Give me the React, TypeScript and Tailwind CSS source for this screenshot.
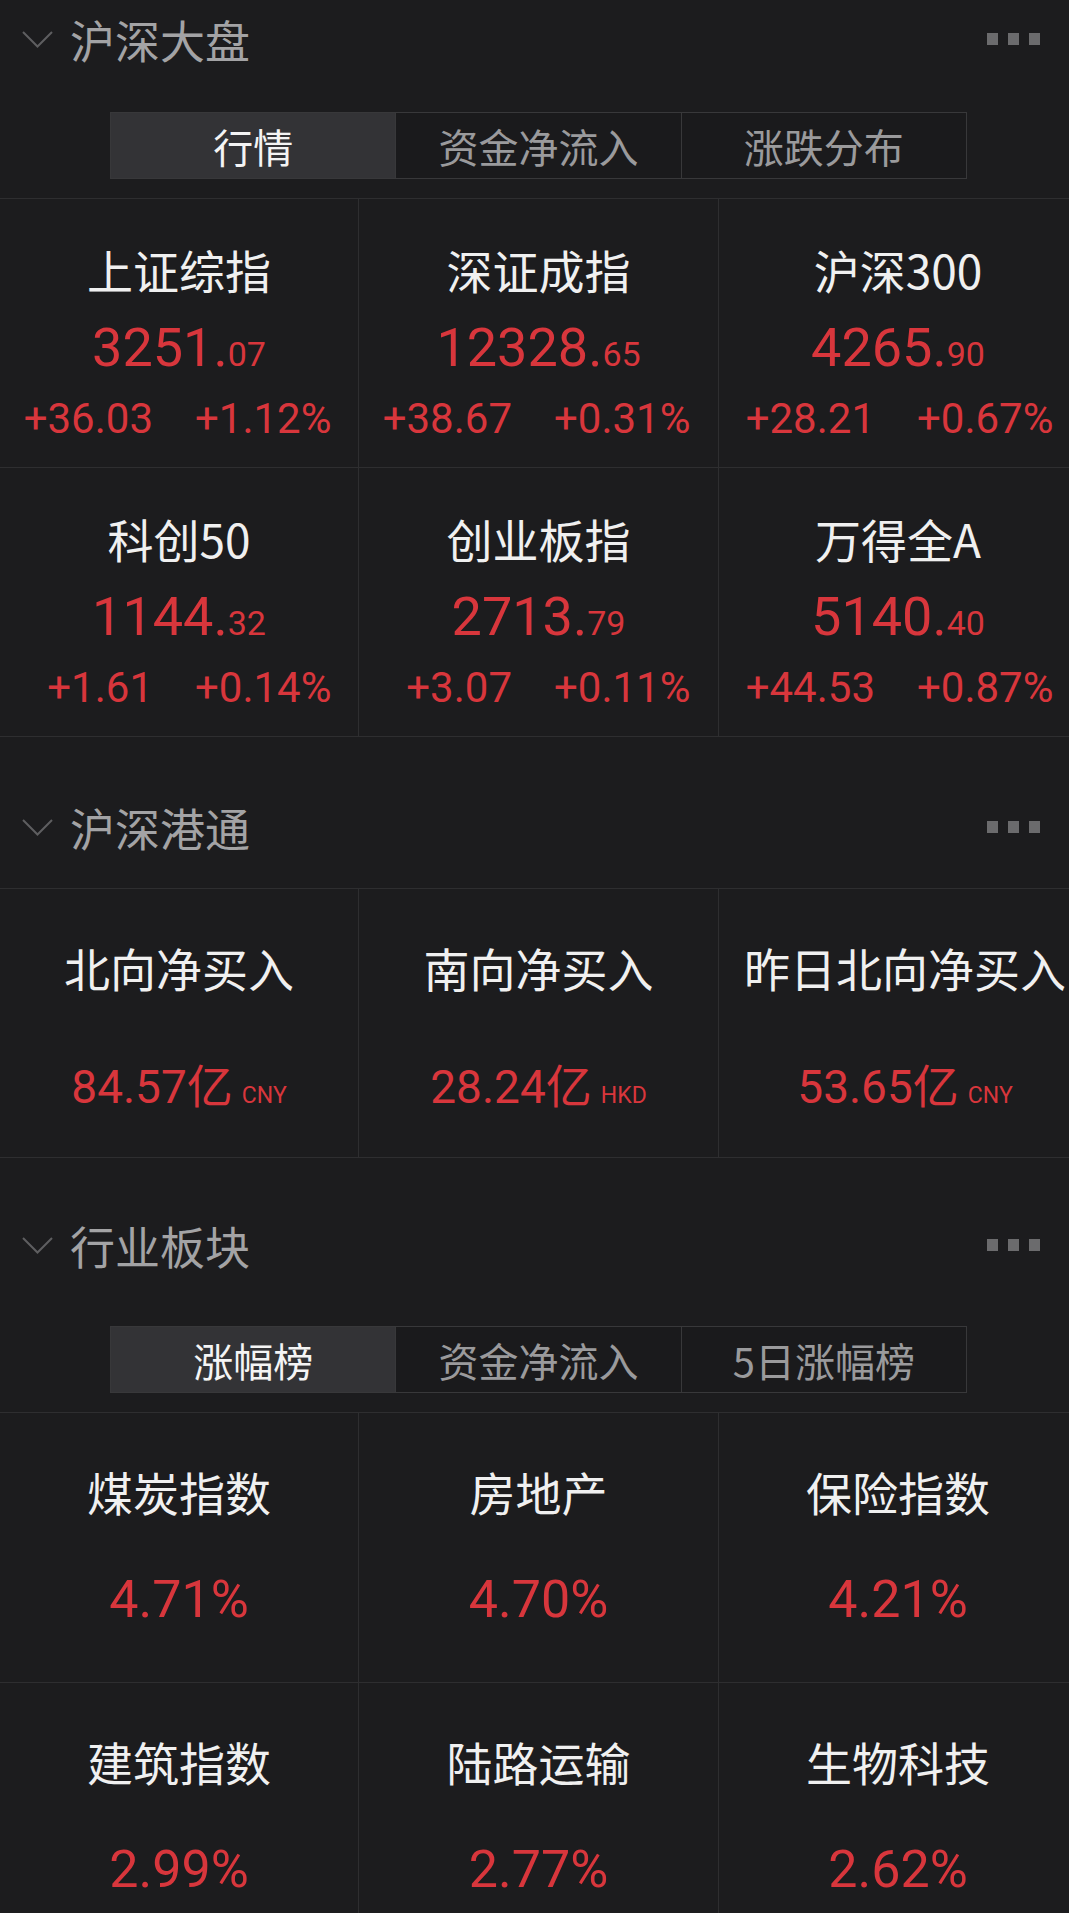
import React from "react";

const CJK = "font-['Noto_Sans_CJK_SC','Noto_Sans',sans-serif]";
const NUM = "font-['Roboto','Noto_Sans_CJK_SC',sans-serif]";
const RED = "text-[#d8363c]";

function Header({ title }: { title: string }) {
  return (
    <div className="flex h-[78px] items-center pl-[22px] pr-[29px]">
      <svg width="31" height="17" viewBox="0 0 31 17" className="shrink-0">
        <polyline points="1,1 15.5,15.5 30,1" fill="none" stroke="#5e5e60" strokeWidth="2" />
      </svg>
      <div className={`${CJK} ml-[17px] text-[45px] leading-[45px] text-[#a3a3a5]`}>{title}</div>
      <div className="flex-1" />
      <div className="flex gap-[10px]">
        <div className="h-[12px] w-[11px] bg-[#6b6b6d]" />
        <div className="h-[12px] w-[11px] bg-[#6b6b6d]" />
        <div className="h-[12px] w-[11px] bg-[#6b6b6d]" />
      </div>
    </div>
  );
}

function Tabs({ items, className }: { items: string[]; className: string }) {
  return (
    <div className={`${className} ml-[110px] flex h-[67px] w-[857px] border border-[#38383a]`}>
      {items.map((t, i) => (
        <div
          key={t}
          className={`flex flex-1 items-center justify-center ${CJK} text-[40px] leading-[40px] ${
            i === 0 ? "bg-[#333336] text-[#f4f4f4]" : "border-l border-[#38383a] bg-[#1a1a1c] text-[#9a9a9c]"
          }`}
        >
          {t}
        </div>
      ))}
    </div>
  );
}

type Idx = { name: string; int: string; dec: string; chg: string; pct: string };

const indices: Idx[] = [
  { name: "上证综指", int: "3251.", dec: "07", chg: "+36.03", pct: "+1.12%" },
  { name: "深证成指", int: "12328.", dec: "65", chg: "+38.67", pct: "+0.31%" },
  { name: "沪深300", int: "4265.", dec: "90", chg: "+28.21", pct: "+0.67%" },
  { name: "科创50", int: "1144.", dec: "32", chg: "+1.61", pct: "+0.14%" },
  { name: "创业板指", int: "2713.", dec: "79", chg: "+3.07", pct: "+0.11%" },
  { name: "万得全A", int: "5140.", dec: "40", chg: "+44.53", pct: "+0.87%" },
];

const flows = [
  { name: "北向净买入", val: "84.57", cur: "CNY" },
  { name: "南向净买入", val: "28.24", cur: "HKD" },
  { name: "昨日北向净买入", val: "53.65", cur: "CNY" },
];

const sectors = [
  { name: "煤炭指数", pct: "4.71%" },
  { name: "房地产", pct: "4.70%" },
  { name: "保险指数", pct: "4.21%" },
  { name: "建筑指数", pct: "2.99%" },
  { name: "陆路运输", pct: "2.77%" },
  { name: "生物科技", pct: "2.62%" },
];

const cellBorder = (i: number) =>
  `border-b border-[#2e2e30] ${i % 3 !== 2 ? "border-r" : "pl-[8px]"}`;

export default function App() {
  return (
    <div className={`h-[1913px] w-[1069px] overflow-hidden bg-[#1c1c1e] ${CJK}`}>
      <Header title="沪深大盘" />
      <Tabs className="mt-[34px]" items={["行情", "资金净流入", "涨跌分布"]} />
      <div className="mt-[19px] grid grid-cols-[359px_360px_1fr] border-t border-[#2e2e30]">
        {indices.map((d, i) => (
          <div key={d.name} className={`flex h-[269px] flex-col items-center pt-[47px] ${cellBorder(i)}`}>
            <div className="whitespace-nowrap text-[46px] leading-[46px] text-[#f0f0f0]">{d.name}</div>
            <div className={`${NUM} ${RED} mt-[24px] h-[64px] whitespace-nowrap text-[54px] leading-[64px]`}>
              {d.int}
              <span className="text-[34px]">{d.dec}</span>
            </div>
            <div className={`${NUM} ${RED} mt-[15px] flex w-full whitespace-nowrap text-[42px] leading-[48px]`}>
              <div className={`${i % 3 === 2 ? "w-[148px]" : "w-[153px]"} text-right`}>{d.chg}</div>
              <div className="ml-[42px]">{d.pct}</div>
            </div>
          </div>
        ))}
      </div>

      <div className="mt-[51px]">
        <Header title="沪深港通" />
      </div>
      <div className="mt-[22px] grid grid-cols-[359px_360px_1fr] border-t border-[#2e2e30]">
        {flows.map((d, i) => (
          <div
            key={d.name}
            className={`flex h-[269px] flex-col items-center pt-[55px] ${cellBorder(i)} ${i === 2 ? "pl-[22px]" : ""}`}
          >
            <div className="whitespace-nowrap text-[46px] leading-[46px] text-[#f0f0f0]">{d.name}</div>
            <div className={`${RED} mt-[66px] flex h-[54px] items-baseline whitespace-nowrap leading-[54px]`}>
              <span className={`${NUM} text-[46px]`}>{d.val}</span>
              <span className={`${CJK} text-[46px]`}>亿</span>
              <span className={`${NUM} ml-[9px] text-[23px]`}>{d.cur}</span>
            </div>
          </div>
        ))}
      </div>

      <div className="mt-[48px]">
        <Header title="行业板块" />
      </div>
      <Tabs className="mt-[42px]" items={["涨幅榜", "资金净流入", "5日涨幅榜"]} />
      <div className="mt-[19px] grid grid-cols-[359px_360px_1fr] border-t border-[#2e2e30]">
        {sectors.map((d, i) => (
          <div key={d.name} className={`flex h-[270px] flex-col items-center pt-[55px] ${cellBorder(i)}`}>
            <div className="whitespace-nowrap text-[46px] leading-[46px] text-[#f0f0f0]">{d.name}</div>
            <div className={`${NUM} ${RED} mt-[56px] h-[60px] whitespace-nowrap text-[52px] leading-[60px]`}>{d.pct}</div>
          </div>
        ))}
      </div>
    </div>
  );
}
